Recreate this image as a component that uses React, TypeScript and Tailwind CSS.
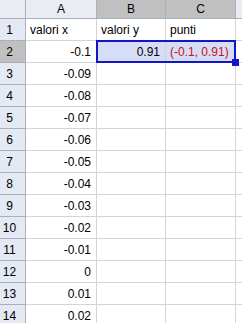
const cols = [
  { key: "A", w: "w-[71px]" },
  { key: "B", w: "w-[69px]" },
  { key: "C", w: "w-[70px]" },
];

const aValues = [
  "-0.09",
  "-0.08",
  "-0.07",
  "-0.06",
  "-0.05",
  "-0.04",
  "-0.03",
  "-0.02",
  "-0.01",
  "0",
  "0.01",
  "0.02",
];

function RowHeader({ n, selected }: { n: number; selected?: boolean }) {
  return (
    <div
      className={`w-[26px] shrink-0 h-full flex items-center justify-center pr-[6px] border-r border-b border-[#a9b0bd] ${
        selected ? "bg-[#c0c0c0]" : "bg-[#e4e9f3]"
      }`}
    >
      {n}
    </div>
  );
}

export default function App() {
  const rows: string[][] = [
    ["valori x", "valori y", "punti"],
    ["-0.1", "0.91", "(-0.1, 0.91)"],
    ...aValues.map((v) => [v, "", ""]),
  ];

  return (
    <div
      className="relative w-[242px] h-[323px] overflow-hidden bg-white text-[12px] text-black"
      style={{ fontFamily: '"Liberation Sans", Arial, sans-serif' }}
    >
      {/* column headers */}
      <div className="flex h-[19px]">
        <div className="w-[26px] shrink-0 border-r border-b border-[#a9b0bd] bg-[#e9ecf2]" />
        {cols.map((c) => (
          <div
            key={c.key}
            className={`${c.w} shrink-0 flex items-center justify-center border-r border-b border-[#a9b0bd] ${
              c.key === "A" ? "bg-[#e9ecf2]" : "bg-[#c0c0c0]"
            }`}
          >
            {c.key}
          </div>
        ))}
        <div className="flex-1 border-b border-[#a9b0bd] bg-[#e9ecf2]" />
      </div>

      {rows.map((r, i) => (
        <div key={i} className="flex h-[22px]">
          <RowHeader n={i + 1} selected={i === 1} />
          {r.map((val, j) => {
            const numeric = i > 0 && j < 2;
            const sel = i === 1 && j > 0;
            return (
              <div
                key={j}
                className={`${cols[j].w} shrink-0 flex items-center border-r border-b border-[#d4d4d4] whitespace-nowrap ${
                  numeric ? "justify-end pr-[5px]" : "pl-[4px]"
                } ${sel ? "bg-[#d6ddf6]" : ""} ${i === 1 && j === 2 ? "text-[#cc1122]" : ""}`}
              >
                {val}
              </div>
            );
          })}
          <div className="flex-1 border-b border-[#d4d4d4]" />
        </div>
      ))}

      {/* selection B2:C2 */}
      <div className="absolute left-[96px] top-[40px] w-[140px] h-[23px] border-2 border-[#1414c8]">
        <div className="absolute -right-[5px] -bottom-[5px] w-[7px] h-[7px] bg-[#1414c8]" />
      </div>
    </div>
  );
}
